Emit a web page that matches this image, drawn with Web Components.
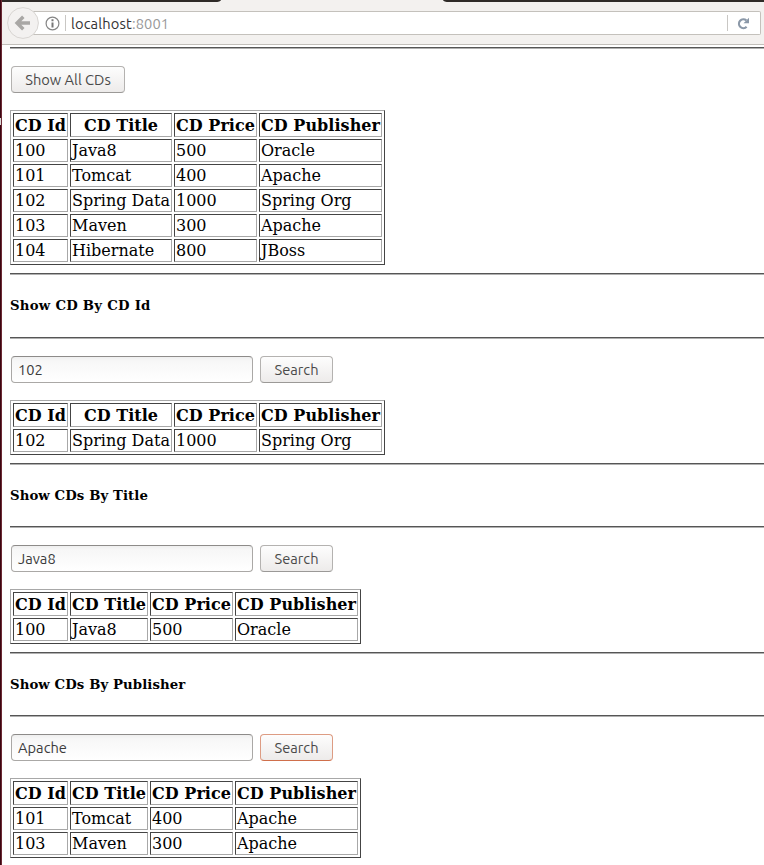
<!DOCTYPE html>
<html lang="en">
<head>
<meta charset="utf-8">
<title>CD Catalogue</title>
<style>
html, body { margin: 0; height: 865px; overflow: hidden; background: #fff; }
</style>
</head>
<body>
<app-window></app-window>
<script>
const define = (name, html, setup) => customElements.define(name, class extends HTMLElement {
  connectedCallback() {
    if (this.shadowRoot) return;
    const root = this.attachShadow({ mode: 'open' });
    root.innerHTML = html;
    if (setup) setup(this, root);
  }
});

define('browser-bar', `
<style>
:host { display: flex; flex-direction: column; height: 45px; box-sizing: border-box; background: #f3f1ef; border-bottom: 1px solid #c2bfba; font: 14.67px/22px Ubuntu, "Noto Sans", sans-serif; }
.tabs { height: 2px; flex: none; display: flex; justify-content: space-between; background: #f3f1ef; }
.tabs i { background: #2f2b28; height: 2px; }
.tabs i:first-child { width: 219px; border-bottom-right-radius: 6px 2px; }
.tabs i:last-child { width: 321px; border-bottom-left-radius: 6px 2px; }
.nav { display: flex; align-items: center; height: 42px; padding-right: 3px; }
.back { flex: none; width: 32px; height: 32px; margin-left: 5px; z-index: 1; }
.url { flex: 1; margin-left: -8px; height: 24px; box-sizing: border-box; border: 1px solid #c4c1bc; border-left: 0; border-radius: 0 2px 2px 0; background: #fff; display: flex; align-items: center; padding-left: 14px; }
.sep { width: 1px; height: 16px; background: #c9c7c4; }
.addr { flex: 1; margin-left: 5px; padding-top: 1px; color: #333; white-space: nowrap; letter-spacing: .14px; }
.addr span { color: #999; }
svg { display: block; }
.info { margin-right: 5px; }
.reload { margin: 0 10px 0 9px; }
</style>
<div class="tabs"><i></i><i></i></div>
<div class="nav">
<svg class="back" viewBox="0 0 32 32"><circle cx="16" cy="16" r="15.4" fill="#f3f1f0" stroke="#d8d5d2"/><path d="M23 16H11M16.3 9.8 10.1 16l6.2 6.2" fill="none" stroke="#a9a7a5" stroke-width="3.5"/></svg>
<div class="url">
<svg class="info" width="15" height="15" viewBox="0 0 15 15"><circle cx="7.5" cy="7.5" r="6.4" fill="none" stroke="#858585" stroke-width="1.2"/><path d="M7.5 3.3v2M7.5 6.5v5" stroke="#777" stroke-width="2"/></svg>
<i class="sep"></i><div class="addr"><a>localhost</a><span>:8001</span></div><i class="sep"></i>
<svg class="reload" width="13" height="13" viewBox="0 0 13 13"><path d="M9.6 9.7A4.4 4.4 0 1 1 9.3 3.4" fill="none" stroke="#8b98a8" stroke-width="2.2"/><path d="M12 .8v5.5H6.5z" fill="#8b98a8"/></svg>
</div></div>`);

define('rule-line', `<style>:host { display: block; height: 2px; box-sizing: border-box; border-top: 1px solid #555; background: #b0b0b0; }</style>`);

define('push-button', `
<style>
:host { display: block; box-sizing: border-box; height: 27px; border: 1px solid #b4b2b0; border-bottom-color: #9b9997; border-radius: 4px; background: linear-gradient(#fdfdfd, #edebea); color: #4a4a4a; font: 14.67px/26px Ubuntu, "Noto Sans", sans-serif; text-align: center; white-space: nowrap; width: 73px; }
:host([wide]) { width: 114px; }
:host([active]) { border-color: #dd9c83; border-bottom-color: #cf6f4b; }
</style><slot></slot>`);

define('text-field', `
<style>
:host { display: block; box-sizing: border-box; width: 242px; height: 27px; border: 1px solid #aaa8a6; border-top-color: #8d8b89; border-radius: 4px; background: linear-gradient(#efefef, #f7f7f7 4px, #fff); padding-left: 6px; color: #3c3c3c; font: 14.67px/26px Ubuntu, "Noto Sans", sans-serif; white-space: nowrap; }
</style><slot></slot>`);

define('form-row', `<style>:host { display: flex; gap: 7px; padding: 17px 0 17px 1px; }</style><slot></slot>`);

define('section-title', `
<style>:host { display: flex; align-items: center; height: 61px; box-sizing: border-box; font: bold 13.28px/16px "DejaVu Serif", serif; letter-spacing: .1px; color: #000; white-space: nowrap; }
:host([tall]) { height: 62px; letter-spacing: .26px; }</style><span><slot></slot></span>`);

define('cd-table', `
<style>
:host { display: grid; width: max-content; gap: 2px; padding: 2px; border: 1px solid; border-color: #a8a8a8 #444 #444 #a8a8a8; grid-template-columns: 55px 102px 83px 123px; grid-auto-rows: 23px; grid-template-rows: 24px; margin-bottom: 8px; font: 16px/19px "DejaVu Serif", serif; color: #000; }
:host([narrow]) { grid-template-columns: 55px 78px 83px 123px; }
div { box-sizing: border-box; border: 1px solid; border-color: #444 #a8a8a8 #a8a8a8 #444; padding: 1px; white-space: nowrap; min-width: 0; }
.h { font-weight: bold; letter-spacing: .05px; display: flex; justify-content: center; line-height: 22px; }
</style>`, (host, root) => {
  const add = (text, cls) => {
    const d = document.createElement('div');
    d.className = cls;
    const s = document.createElement('span');
    s.textContent = text;
    d.append(s);
    root.append(d);
  };
  ['CD Id', 'CD Title', 'CD Price', 'CD Publisher'].forEach(t => add(t, 'h'));
  host.getAttribute('rows').split(';').forEach(r => r.split(',').forEach(t => add(t, 'c')));
});

define('app-window', `
<style>
:host { display: grid; grid-template-columns: 2px 1fr; height: 865px; overflow: hidden; }
.edge { background: linear-gradient(#dcdad8, #dcdad8) 0 118px / 1px 7px no-repeat, linear-gradient(90deg, #3c0611 1px, #6b2a34 1px); }
main { padding: 2px 0 0 8px; }
</style>
<div class="edge"></div>
<div>
<browser-bar></browser-bar>
<main>
<rule-line></rule-line>
<form-row><push-button wide>Show All CDs</push-button></form-row>
<cd-table rows="100,Java8,500,Oracle;101,Tomcat,400,Apache;102,Spring Data,1000,Spring Org;103,Maven,300,Apache;104,Hibernate,800,JBoss"></cd-table>
<rule-line></rule-line>
<section-title tall>Show CD By CD Id</section-title>
<rule-line></rule-line>
<form-row><text-field>102</text-field><push-button>Search</push-button></form-row>
<cd-table rows="102,Spring Data,1000,Spring Org"></cd-table>
<rule-line></rule-line>
<section-title>Show CDs By Title</section-title>
<rule-line></rule-line>
<form-row><text-field>Java8</text-field><push-button>Search</push-button></form-row>
<cd-table narrow rows="100,Java8,500,Oracle"></cd-table>
<rule-line></rule-line>
<section-title>Show CDs By Publisher</section-title>
<rule-line></rule-line>
<form-row><text-field>Apache</text-field><push-button active>Search</push-button></form-row>
<cd-table narrow rows="101,Tomcat,400,Apache;103,Maven,300,Apache"></cd-table>
</main>
</div>`);
</script>
</body>
</html>
